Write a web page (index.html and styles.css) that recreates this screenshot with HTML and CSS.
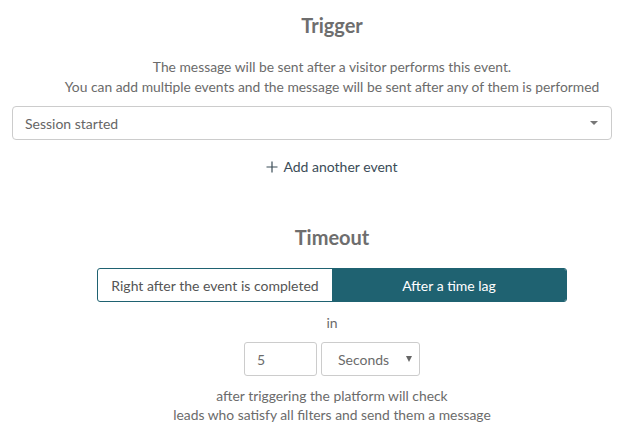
FILE: index.html
```html
<!DOCTYPE html>
<html>
<head>
<meta charset="utf-8">
<link rel="stylesheet" href="styles.css">
</head>
<body>
<div class="page">
  <div class="center">
    <h2 class="title">Trigger</h2>
    <p class="desc">The message will be sent after a visitor performs this event.<br>You can add multiple events and the message will be sent after any of them is performed</p>
  </div>
  <div class="select">
    <span>Session started</span>
    <span class="caret"></span>
  </div>
  <div class="center">
    <div class="add"><svg class="plus" width="12" height="12" viewBox="0 0 12 12"><path d="M6 0.5V11.5M0.5 6H11.5" stroke="#3b4c57" stroke-width="1.2" fill="none"/></svg>Add another event</div>
    <h2 class="title title2">Timeout</h2>
    <div class="seg">
      <div class="seg-item">Right after the event is completed</div>
      <div class="seg-item active">After a time lag</div>
    </div>
    <div class="in">in</div>
    <div class="inputs">
      <div class="num">5</div>
      <div class="unit"><span>Seconds</span><span class="caret small"></span></div>
    </div>
    <p class="desc note">after triggering the platform will check<br>leads who satisfy all filters and send them a message</p>
  </div>
</div>
</body>
</html>
```
FILE: styles.css
```css
html, body { margin: 0; padding: 0; background: #fff; }
body { font-family: Lato, "Open Sans", sans-serif; color: #6b6b6b; font-size: 14px; }
.page { width: 628px; padding-top: 12px; }
.center { margin-left: 36px; width: 592px; display: flex; flex-direction: column; align-items: center; text-align: center; }
.title { margin: 0; font-size: 20px; font-weight: bold; color: #6e6e6e; line-height: 26px; }
.desc { margin: 19px 0 0; line-height: 20px; font-size: 13.85px; }
.select { margin: 9px 0 0 12px; width: 600px; height: 34px; box-sizing: border-box; border: 1px solid #ccc; border-radius: 4px; display: flex; align-items: center; justify-content: space-between; padding: 0 13px 0 12px; color: #666; }
.caret { width: 0; height: 0; border-left: 4px solid transparent; border-right: 4px solid transparent; border-top: 4px solid #777; }
.add { margin-top: 17px; color: #3b4c57; line-height: 20px; display: flex; align-items: center; gap: 5px; }
.plus { display: block; }
.title2 { margin-top: 47px; }
.seg { margin-top: 18px; width: 470px; height: 34px; display: flex; border: 1px solid #1f6271; border-radius: 3px; box-sizing: border-box; overflow: hidden; }
.seg-item { flex: 1; display: flex; align-items: center; justify-content: center; color: #555; }
.seg-item.active { background: #1f6271; color: #fff; }
.in { margin-top: 11px; line-height: 20px; }
.inputs { margin-top: 9px; display: flex; gap: 4px; }
.num, .unit { height: 34px; box-sizing: border-box; border: 1px solid #ccc; border-radius: 3px; display: flex; align-items: center; }
.num { width: 73px; padding-left: 12px; }
.unit { width: 99px; padding: 0 7px 0 16px; justify-content: space-between; }
.caret.small { border-left-width: 3.5px; border-right-width: 3.5px; border-top-width: 6px; border-top-color: #666; }
.note { margin-top: 10px; line-height: 19px; }
```
